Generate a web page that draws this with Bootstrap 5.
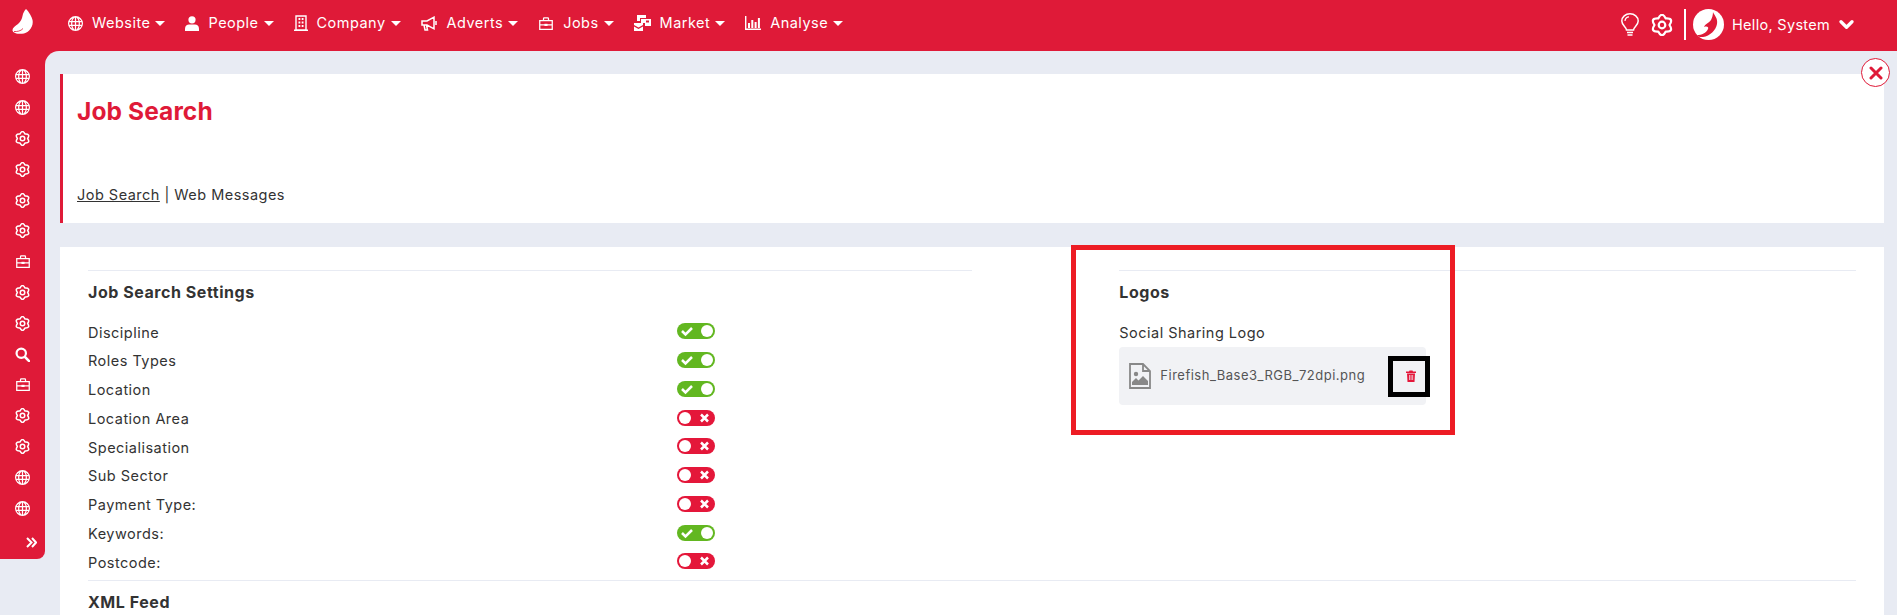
<!DOCTYPE html>
<html lang="en">
<head>
<meta charset="utf-8">
<title>Job Search</title>
<link href="https://cdn.jsdelivr.net/npm/bootstrap@5.3.0/dist/css/bootstrap.min.css" rel="stylesheet">
<style>
:root{--brand:#df1a38;--page:#e8ebf3;}
html,body{height:615px;overflow:hidden;}
body{background:var(--page);font-family:Inter,"Liberation Sans",sans-serif;font-size:14.5px;color:#333;letter-spacing:.48px;position:relative;}
.topbar{height:51px;background:var(--brand);padding:0 43px 0 12px;justify-content:flex-start;}
.brand-mark{width:21px;height:25px;margin-right:35px;color:#fff;margin-bottom:9px;}
.topnav{gap:20px;margin-bottom:5px;}
.topbar .topnav .nav-link{color:#fff;padding:0;font-size:14.5px;display:flex;align-items:center;line-height:20px;}
.topnav .nav-link svg{margin-right:9px;flex:none;}
.topnav .dropdown-toggle::after{border-top-width:5px;border-left-width:5px;border-right-width:5px;margin-left:5px;}
.right-tools{color:#fff;margin-bottom:2px;}
.tool-sep{width:2px;height:31px;background:#fff;margin:0 7px 0 11px;}
.hello{font-size:14.5px;letter-spacing:.3px;margin:0 9px 0 8px;}
.shell{height:564px;background:linear-gradient(var(--brand) 20px,transparent 20px);}
.side{width:45px;height:508px;background:var(--brand);border-bottom-right-radius:8px;flex:none;padding-top:10.6px;}
.side-icon{height:30.8px;display:flex;align-items:center;justify-content:center;color:#fff;}
.side-more{height:37px;padding-right:8px;color:#fff;justify-content:flex-end;display:flex;align-items:center;}
.main-area{background:var(--page);border-top-left-radius:14px;padding:23px 13px 0 15px;flex:1;min-width:0;}
.title-card{height:149px;background:#fff;border-left:3px solid var(--brand);padding:22px 14px 0;margin-bottom:24px;}
.page-title{color:var(--brand);font-size:24.5px;font-weight:700;letter-spacing:.1px;line-height:30px;margin:0;}
.crumbs{margin-top:59px;line-height:20px;}
.crumbs a{color:#333;}
.body-card{height:368px;background:#fff;padding:23px 28px 0;}
.rule{border-top:1px solid #e8ebf3;}
.sect-head{font-size:16px;font-weight:700;color:#333;line-height:22px;margin:10px 0 15px;letter-spacing:.55px;}
.set-row{height:28.75px;align-items:center;color:#333;}
.settings-col{padding-bottom:3px;}
.switcher{width:38px;height:16px;border-radius:8px;display:flex;align-items:center;padding:0 2px;color:#fff;margin-bottom:2px;}
.switcher-on{background:#62b720;justify-content:space-between;}
.switcher-off{background:#e4173a;justify-content:space-between;}
.knob{width:12px;height:12px;border-radius:50%;background:#fff;}
.xml-head{margin:0;padding-top:10px;}
.file-box{height:58px;background:#f1f2f5;border-radius:4px;padding:0 10px;color:#555;font-size:13px;}
.file-name{margin-left:9px;letter-spacing:.5px;}
.trash{margin-left:auto;color:#e4173a;}
.mark-red{position:absolute;left:1071px;top:245px;width:384px;height:190px;border:5px solid #ed1c24;pointer-events:none;}
.mark-black{position:absolute;left:1388px;top:356px;width:42px;height:41px;border:5px solid #000;pointer-events:none;}
.close-round{position:absolute;left:1861px;top:58px;width:29px;height:29px;border-radius:50%;background:#fff;border:1px solid var(--brand);color:var(--brand);display:flex;align-items:center;justify-content:center;}
</style>
</head>
<body>
<svg width="0" height="0" class="position-absolute">
<defs>
<symbol id="i-globe" viewBox="0 0 24 24">
<path fill="currentColor" fill-rule="evenodd" d="M12 0a12 12 0 1 1 0 24 12 12 0 0 1 0-24ZM11 2.200C9 3.600 7.700 5.600 7.200 8H11Zm2 0V8h3.800c-.5-2.400-1.800-4.400-3.800-5.800ZM5.200 8c.3-1.500 1-3 2-4.200C5 4.800 3.400 6.200 2.800 8Zm13.600 0h2.400c-.6-1.800-2.200-3.200-4.400-4.200 1 1.200 1.700 2.700 2 4.200ZM2.200 10c-.3 1.300-.3 2.700 0 4H5c-.1-1.300-.1-2.700 0-4Zm4.800 0c-.1 1.300-.1 2.700 0 4h4v-4Zm6 0v4h4c.1-1.300.1-2.700 0-4Zm6 0c.1 1.300.1 2.700 0 4h2.800c.3-1.300.3-2.700 0-4ZM2.800 16c.6 1.800 2.200 3.200 4.400 4.200-1-1.200-1.700-2.700-2-4.200Zm4.400 0c.5 2.400 1.800 4.400 3.800 5.800V16Zm5.800 0v5.800c2-1.400 3.300-3.400 3.800-5.800Zm5.800 0c-.3 1.500-1 3-2 4.200 2.200-1 3.800-2.400 4.400-4.200Z"/>
</symbol>
<symbol id="i-gear" viewBox="1 1 22 22">
<path fill="none" stroke="currentColor" stroke-width="2.200" stroke-linejoin="round" d="M8.250 5.500Q12-2 15.750 5.500 24.100 5 19.500 12 24.100 19 15.750 18.500 12 26 8.250 18.500-.1 19 4.500 12-.1 5 8.250 5.500Z"/>
<circle cx="12" cy="12" r="3.300" fill="none" stroke="currentColor" stroke-width="2.200"/>
</symbol>
<symbol id="i-case" viewBox="0 0 24 24">
<path fill="none" stroke="currentColor" stroke-width="2" d="M2 7.500h20v14H2ZM8 7.500V4.200q0-1.200 1.200-1.200h5.600q1.200 0 1.200 1.200v3.300M2 14h20"/>
<path fill="currentColor" d="M9.500 12.500h5v3.500h-5Z"/>
</symbol>
<symbol id="i-search" viewBox="0 0 24 24">
<circle cx="10" cy="10" r="7.500" fill="none" stroke="currentColor" stroke-width="3.500"/>
<path d="m16 16 6.500 6.500" stroke="currentColor" stroke-width="4" stroke-linecap="round"/>
</symbol>
<symbol id="i-caretd" viewBox="0 0 16 12">
<path d="M2 3l6 6 6-6" fill="none" stroke="currentColor" stroke-width="3.500" stroke-linecap="round" stroke-linejoin="round"/>
</symbol>
<symbol id="i-yes" viewBox="0 0 16 12"><path d="M3 6l3.500 3.500L13 3" fill="none" stroke="currentColor" stroke-width="2.500"/></symbol>
<symbol id="i-no" viewBox="0 0 16 12"><path d="M4 2.500l7 7M11 2.500l-7 7" fill="none" stroke="currentColor" stroke-width="2.500"/></symbol>
</defs>
</svg>

<nav class="navbar navbar-expand topbar d-flex align-items-center flex-nowrap">
  <svg class="brand-mark flex-none" viewBox="0 0 21 25" aria-hidden="true"><path fill="currentColor" d="M14 0C15 1 19 5 20.500 11 22 18 16 24.500 10 24.800 5 25 1 24 .5 21.500.2 19 3 17 6 15 9 12 10 10 10.500 7 11 4 12.500 1.500 14 0Z"/><path fill="none" stroke="#df1a38" stroke-width=".8" d="M2 22.500c3 .3 7-.5 9-3"/></svg>
  <ul class="navbar-nav topnav flex-row">
    <li class="nav-item"><a class="nav-link dropdown-toggle" href="#"><svg width="15" height="15"><use href="#i-globe"/></svg>Website</a></li>
    <li class="nav-item"><a class="nav-link dropdown-toggle" href="#"><svg width="14" height="15" viewBox="0 0 14 15"><circle cx="7" cy="3.800" r="3.600" fill="currentColor"/><path fill="currentColor" d="M0 15v-2.500C0 10 2 8.500 4 8.500h6c2 0 4 1.500 4 4V15Z"/></svg>People</a></li>
    <li class="nav-item"><a class="nav-link dropdown-toggle" href="#"><svg width="14" height="16" viewBox="0 0 14 16"><path fill="none" stroke="currentColor" stroke-width="1.400" d="M2 1h10v14H2ZM0 15.300h14"/><path fill="currentColor" d="M4.500 3h1.800v2H4.500Zm3.200 0h1.800v2H7.700Zm-3.200 3.500h1.800v2H4.500Zm3.200 0h1.800v2H7.700ZM4.500 10h1.800v2H4.500Zm3.200 0h1.800v2H7.700Z"/></svg>Company</a></li>
    <li class="nav-item"><a class="nav-link dropdown-toggle" href="#"><svg width="17" height="15" viewBox="0 0 17 15"><path fill="none" stroke="currentColor" stroke-width="1.500" d="M1 5h5l7-3.800v11.600L6 9H1ZM3 9l1 5h2.500L5.500 9M15 5v4"/></svg>Adverts</a></li>
    <li class="nav-item"><a class="nav-link dropdown-toggle" href="#"><svg width="16" height="15"><use href="#i-case"/></svg>Jobs</a></li>
    <li class="nav-item"><a class="nav-link dropdown-toggle" href="#"><svg width="17" height="16" viewBox="0 0 17 16"><path fill="currentColor" d="M3 0h9v3H6v3H3Zm4 4h10v7h-6V8H7Zm5 1.500v2h3v-2ZM0 8h9v2L4.500 12.500 0 10Zm0 3.500 4.500 2.500L9 11.500V16H0Z"/></svg>Market</a></li>
    <li class="nav-item"><a class="nav-link dropdown-toggle" href="#"><svg width="16" height="14" viewBox="0 0 16 14"><path fill="none" stroke="currentColor" stroke-width="1.400" d="M.7 0v13.300H16"/><path fill="currentColor" d="M3 7h2v5H3Zm3.300-3h2v8h-2Zm3.300 2h2v6h-2Zm3.300-4h2v10h-2Z"/></svg>Analyse</a></li>
  </ul>
  <div class="right-tools ms-auto d-flex align-items-center">
    <svg width="18" height="24" viewBox="0 0 18 24" class="me-2"><path fill="none" stroke="currentColor" stroke-width="1.500" d="M5.500 17c0-3-4.700-4.500-4.700-9C.8 4 4.500.8 9 .8S17.200 4 17.200 8c0 4.500-4.700 6-4.700 9ZM6 19.500h6M6.500 22h5"/><path fill="none" stroke="currentColor" stroke-width="1.200" d="M4 8c0-2.500 2-4.200 4-4.200"/></svg>
    <svg width="22" height="22" class="ms-1"><use href="#i-gear"/></svg>
    <span class="tool-sep"></span>
    <svg width="31" height="31" viewBox="0 0 31 31"><circle cx="15.500" cy="15.500" r="15.500" fill="#fff"/><path fill="#df1a38" d="M20 3c1 3 5 6 4 12-1 6-7 12-14 13-4 .5-5-1-6-2 5 0 9-2 11-6 1-2-1-3-4-2 1-3 5-4 7-7 1-2 2-5 2-8Z"/></svg>
    <span class="hello">Hello, System</span>
    <svg width="15" height="11"><use href="#i-caretd"/></svg>
  </div>
</nav>

<div class="shell d-flex">
  <aside class="side">
    <div class="side-icon"><svg width="15" height="15"><use href="#i-globe"/></svg></div>
    <div class="side-icon"><svg width="15" height="15"><use href="#i-globe"/></svg></div>
    <div class="side-icon"><svg width="15" height="15"><use href="#i-gear"/></svg></div>
    <div class="side-icon"><svg width="15" height="15"><use href="#i-gear"/></svg></div>
    <div class="side-icon"><svg width="15" height="15"><use href="#i-gear"/></svg></div>
    <div class="side-icon"><svg width="15" height="15"><use href="#i-gear"/></svg></div>
    <div class="side-icon"><svg width="16" height="15"><use href="#i-case"/></svg></div>
    <div class="side-icon"><svg width="15" height="15"><use href="#i-gear"/></svg></div>
    <div class="side-icon"><svg width="15" height="15"><use href="#i-gear"/></svg></div>
    <div class="side-icon"><svg width="15" height="15"><use href="#i-search"/></svg></div>
    <div class="side-icon"><svg width="16" height="15"><use href="#i-case"/></svg></div>
    <div class="side-icon"><svg width="15" height="15"><use href="#i-gear"/></svg></div>
    <div class="side-icon"><svg width="15" height="15"><use href="#i-gear"/></svg></div>
    <div class="side-icon"><svg width="15" height="15"><use href="#i-globe"/></svg></div>
    <div class="side-icon"><svg width="15" height="15"><use href="#i-globe"/></svg></div>
    <div class="side-more"><svg width="11" height="11" viewBox="0 0 11 11"><path d="M1 1l4.500 4.500L1 10M6 1l4 4.500L6 10" fill="none" stroke="currentColor" stroke-width="2"/></svg></div>
  </aside>
  <main class="main-area">
    <section class="title-card">
      <h1 class="page-title">Job Search</h1>
      <div class="crumbs"><a href="#">Job Search</a> | Web Messages</div>
    </section>
    <section class="body-card">
      <div class="row g-0">
        <div class="col-6 settings-col">
          <div class="rule"></div>
          <h2 class="sect-head">Job Search Settings</h2>
          <div class="row g-0 set-row"><div class="col-8">Discipline</div><div class="col-4"><span class="switcher switcher-on"><svg width="16" height="12"><use href="#i-yes"/></svg><span class="knob"></span></span></div></div>
          <div class="row g-0 set-row"><div class="col-8">Roles Types</div><div class="col-4"><span class="switcher switcher-on"><svg width="16" height="12"><use href="#i-yes"/></svg><span class="knob"></span></span></div></div>
          <div class="row g-0 set-row"><div class="col-8">Location</div><div class="col-4"><span class="switcher switcher-on"><svg width="16" height="12"><use href="#i-yes"/></svg><span class="knob"></span></span></div></div>
          <div class="row g-0 set-row"><div class="col-8">Location Area</div><div class="col-4"><span class="switcher switcher-off"><span class="knob"></span><svg width="16" height="12"><use href="#i-no"/></svg></span></div></div>
          <div class="row g-0 set-row"><div class="col-8">Specialisation</div><div class="col-4"><span class="switcher switcher-off"><span class="knob"></span><svg width="16" height="12"><use href="#i-no"/></svg></span></div></div>
          <div class="row g-0 set-row"><div class="col-8">Sub Sector</div><div class="col-4"><span class="switcher switcher-off"><span class="knob"></span><svg width="16" height="12"><use href="#i-no"/></svg></span></div></div>
          <div class="row g-0 set-row"><div class="col-8">Payment Type:</div><div class="col-4"><span class="switcher switcher-off"><span class="knob"></span><svg width="16" height="12"><use href="#i-no"/></svg></span></div></div>
          <div class="row g-0 set-row"><div class="col-8">Keywords:</div><div class="col-4"><span class="switcher switcher-on"><svg width="16" height="12"><use href="#i-yes"/></svg><span class="knob"></span></span></div></div>
          <div class="row g-0 set-row"><div class="col-8">Postcode:</div><div class="col-4"><span class="switcher switcher-off"><span class="knob"></span><svg width="16" height="12"><use href="#i-no"/></svg></span></div></div>
        </div>
        <div class="col-5 offset-1">
          <div class="rule"></div>
          <h2 class="sect-head">Logos</h2>
          <div class="set-row d-flex">Social Sharing Logo</div>
          <div class="row g-0">
            <div class="col-5">
              <div class="file-box d-flex align-items-center">
                <svg width="22" height="26" viewBox="0 0 22 26" class="flex-none"><path fill="none" stroke="#888" stroke-width="1.800" d="M1 1h13l7 7v17H1ZM14 1v7h7"/><circle cx="7" cy="11" r="2.200" fill="#888"/><path fill="#888" d="M3 22v-3l4-4 2.500 2.500L14 13l5 5v4Z"/></svg>
                <span class="file-name">Firefish_Base3_RGB_72dpi.png</span>
                <svg width="10" height="12" viewBox="0 0 10 12" class="trash"><path fill="currentColor" fill-rule="evenodd" d="M0 1.500h3L3.500.5h3L7 1.500h3V3H0ZM1 3.500h8l-.5 8.500h-7ZM3 5v5h.7V5Zm1.700 0v5h.7V5Zm1.700 0v5h.7V5Z"/></svg>
              </div>
            </div>
          </div>
        </div>
      </div>
      <div class="rule"></div>
      <h2 class="sect-head xml-head">XML Feed</h2>
    </section>
  </main>
</div>

<button type="button" class="close-round p-0" aria-label="Close"><svg width="14" height="14" viewBox="0 0 14 14"><path d="M2 2l10 10M12 2 2 12" stroke="currentColor" stroke-width="3" stroke-linecap="round"/></svg></button>
<div class="mark-red"></div>
<div class="mark-black"></div>
<script src="https://cdn.jsdelivr.net/npm/bootstrap@5.3.0/dist/js/bootstrap.bundle.min.js"></script>
</body>
</html>
